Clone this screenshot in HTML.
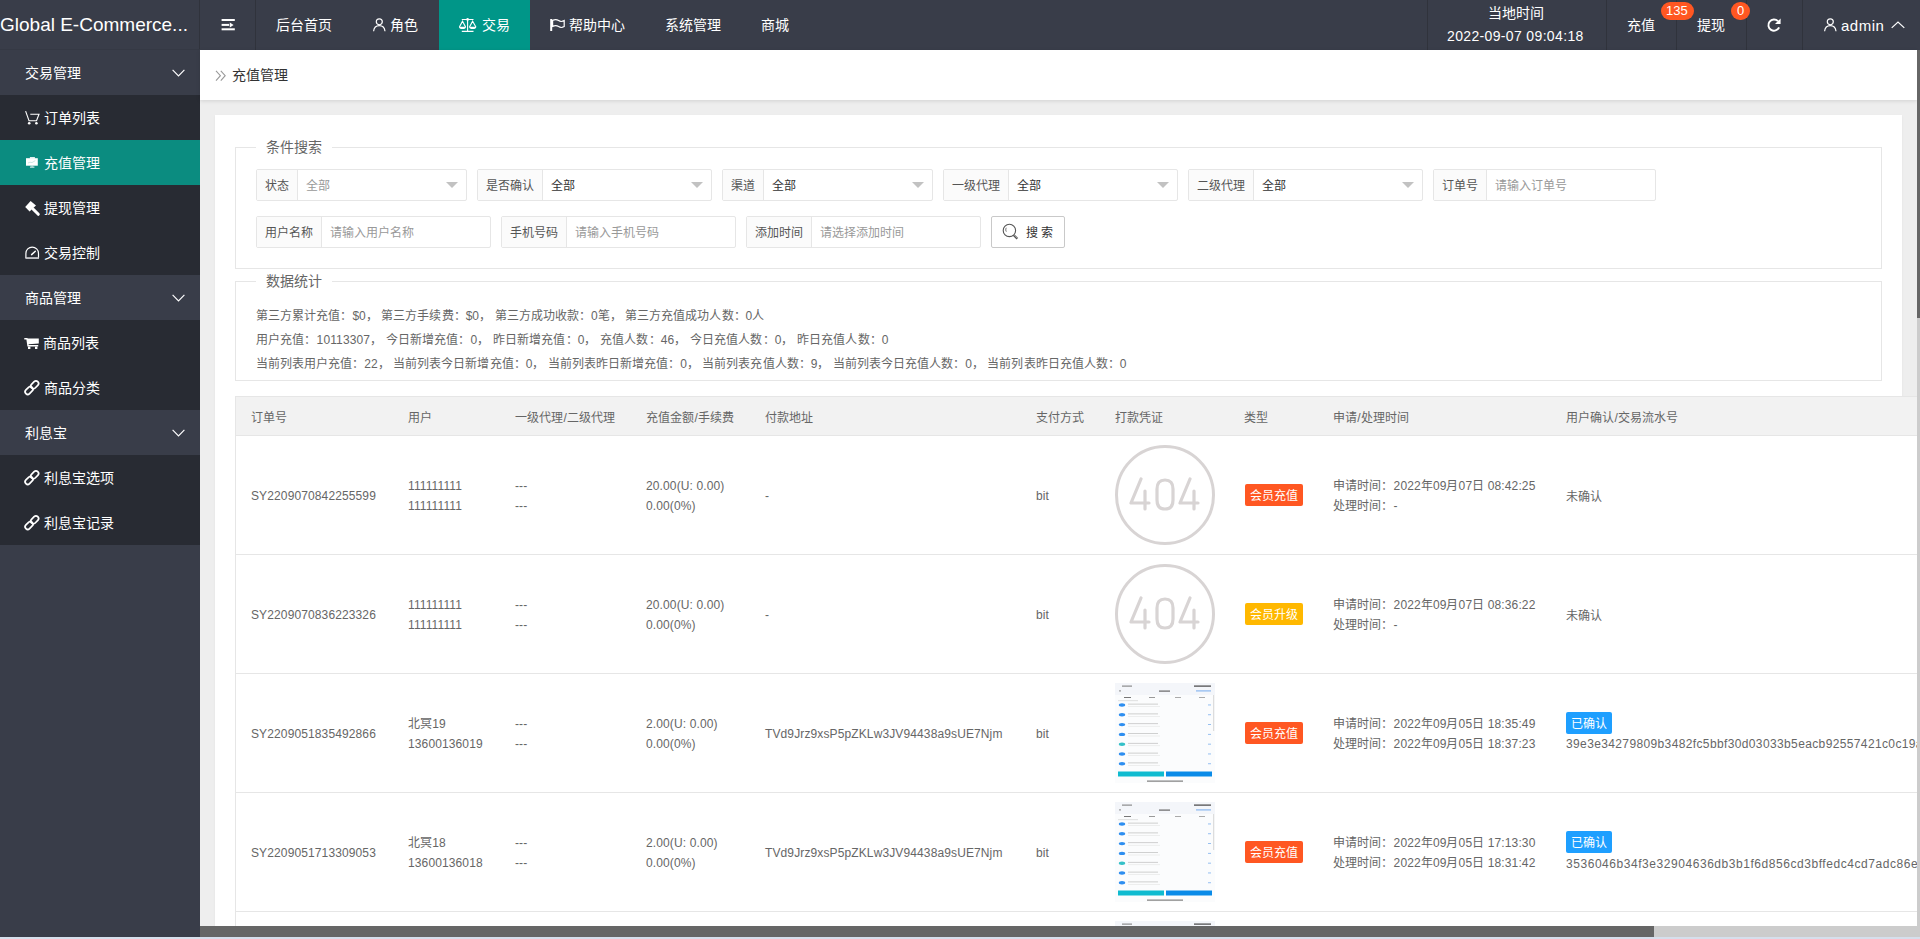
<!DOCTYPE html><html lang="zh-CN"><head><meta charset="utf-8"><style>
*{margin:0;padding:0;box-sizing:border-box}
html,body{width:1920px;height:939px;overflow:hidden;background:#eee;font-family:"Liberation Sans",sans-serif;font-size:14px;color:#666}
div,span{position:absolute;white-space:nowrap}
svg{position:absolute;overflow:visible}
#hdr{left:0;top:0;width:1920px;height:50px;background:#393D49}
.nt{color:#fff;font-size:14px;line-height:16px;font-weight:500}
.sep{top:0;width:1px;height:50px;background:#30333c}
#side{left:0;top:50px;width:200px;height:889px;background:#393D49}
.mi{left:0;width:200px;height:45px}
.sub{background:#282B33}
.act{background:#0b8c80}
.mt{color:#fff;font-size:14px;line-height:16px;font-weight:500}
#bc{left:200px;top:50px;width:1717px;height:50px;background:#fff;box-shadow:0 1px 4px rgba(0,0,0,.12)}
#card{left:215px;top:115px;width:1687px;height:830px;background:#fff;box-shadow:0 1px 2px rgba(0,0,0,.06)}
.fs{border:1px solid #e6e6e6;background:transparent}
.leg{background:#fff;font-size:14px;color:#666;line-height:16px}
.fi{height:32px;border:1px solid #e6e6e6;border-radius:2px;background:#fff}
.lab{left:0;top:0;height:30px;background:#FBFBFB;border-right:1px solid #e6e6e6}
.lt{font-size:12px;color:#555;line-height:14px}
.vt{font-size:12px;color:#333;line-height:14px;top:8px}
.ph{color:#999}
.tri{width:0;height:0;border-left:6px solid transparent;border-right:6px solid transparent;border-top:6px solid #c2c2c2}
.st{font-size:12px;color:#666;line-height:14px}
#tbl{left:235px;top:396px;width:1700px;height:600px;border-top:1px solid #e6e6e6;background:#fff}
#tbl>.lb{left:0;top:0;width:1px;height:600px;background:#e6e6e6}
.thd{left:0;top:0;width:1700px;height:39px;background:#f2f2f2;border-bottom:1px solid #e6e6e6}
.th{font-size:12px;color:#666;line-height:14px;top:13px}
.rb{left:0;width:1700px;height:1px;background:#e6e6e6}
.c{font-size:12px;color:#666;line-height:14px;letter-spacing:0.12px}
.bd{height:22px;border-radius:2px;color:#fff;font-size:12px;line-height:14px}
.bd span{top:5px;left:5px}
</style></head><body>
<div id="hdr">
<span style="left:0;top:14px;font-size:19px;line-height:22px;color:#fff">Global E-Commerce...</span>
<div class="sep" style="left:199px"></div>
<div class="sep" style="left:255px"></div>
<div class="sep" style="left:1427px"></div>
<div class="sep" style="left:1606px"></div>
<div class="sep" style="left:1676px"></div>
<div class="sep" style="left:1746px"></div>
<div class="sep" style="left:1802px"></div>
<div style="left:439px;top:0;width:91px;height:50px;background:#009688"></div>
<svg style="left:221px;top:19px" width="14" height="12" viewBox="0 0 14 12"><rect x="0.6" y="0" width="13.2" height="2" fill="#fff"/><rect x="0.6" y="4.9" width="7.6" height="2" fill="#fff"/><path d="M8.8 3.4 L12.6 5.9 L8.8 8.4Z" fill="#fff"/><rect x="0.6" y="9.3" width="13.2" height="2" fill="#fff"/></svg>
<span class="nt" style="left:276px;top:17px;">后台首页</span>
<svg style="left:373px;top:18px" width="13" height="14" viewBox="0 0 13 14"><circle cx="6.3" cy="3.8" r="3" fill="none" stroke="#fff" stroke-width="1.2"/><path d="M0.6 13.2 C1 9.4 3.3 7.6 6.3 7.6 C9.3 7.6 11.6 9.4 12 13.2" fill="none" stroke="#fff" stroke-width="1.2"/></svg>
<span class="nt" style="left:390px;top:17px;">角色</span>
<svg style="left:459px;top:18px" width="18" height="15" viewBox="0 0 18 15"><g fill="none" stroke="#fff" stroke-width="1.1"><path d="M2.8 1.5H14.5M8.6 1.5V13.4M2.8 13.4H14.5"/><path d="M0.4 9 L3.5 3.2 L6.6 9 M10.5 9 L13.6 3.2 L16.9 9"/></g><circle cx="8.6" cy="1.4" r="1.3" fill="#fff"/><path d="M0 8.7 H7 C7 10.2 5.8 11 3.5 11 C1.2 11 0 10.2 0 8.7Z M10.1 8.7 H17.3 C17.3 10.2 16 11 13.7 11 C11.4 11 10.1 10.2 10.1 8.7Z" fill="#fff"/></svg>
<span class="nt" style="left:482px;top:17px;">交易</span>
<svg style="left:549px;top:18px" width="17" height="14" viewBox="0 0 17 14"><rect x="1.2" y="1" width="2" height="12" fill="#fff"/><path d="M3.6 2.4 C6 1.2 8.2 1.6 9.6 2.6 C11 3.6 13.2 3.8 15.2 2.6 V8.6 C13.2 9.8 11 9.6 9.6 8.6 C8.2 7.6 6 7.2 3.6 8.4 Z" fill="none" stroke="#fff" stroke-width="1.2"/></svg>
<span class="nt" style="left:569px;top:17px;">帮助中心</span>
<span class="nt" style="left:665px;top:17px;">系统管理</span>
<span class="nt" style="left:761px;top:17px;">商城</span>
<span class="nt" style="left:1488px;top:5px;">当地时间</span>
<span class="nt" style="left:1447px;top:28px;letter-spacing:0.35px">2022-09-07 09:04:18</span>
<span class="nt" style="left:1627px;top:17px;">充值</span>
<div style="left:1661px;top:2px;width:33px;height:18px;border-radius:9px;background:#FF5722"></div>
<span class="nt" style="left:1666px;top:4px;font-size:13px;line-height:14px">135</span>
<span class="nt" style="left:1697px;top:17px;">提现</span>
<div style="left:1731px;top:2px;width:19px;height:18px;border-radius:9px;background:#FF5722"></div>
<span class="nt" style="left:1737px;top:4px;font-size:13px;line-height:14px">0</span>
<svg style="left:1767px;top:18px" width="14" height="14" viewBox="0 0 14 14"><path d="M11 3.2 A5.6 5.6 0 1 0 12.1 9.4" fill="none" stroke="#fff" stroke-width="1.9"/><path d="M13.6 0.4 V6 H8 Z" fill="#fff"/></svg>
<svg style="left:1824px;top:18px" width="13" height="14" viewBox="0 0 13 14"><circle cx="6.3" cy="3.8" r="3" fill="none" stroke="#fff" stroke-width="1.2"/><path d="M0.6 13.2 C1 9.4 3.3 7.6 6.3 7.6 C9.3 7.6 11.6 9.4 12 13.2" fill="none" stroke="#fff" stroke-width="1.2"/></svg>
<span class="nt" style="left:1841px;top:17px;font-size:15px;line-height:18px;letter-spacing:0.5px">admin</span>
<svg style="left:1891px;top:21px" width="14" height="8" viewBox="0 0 14 8"><path d="M0.7 6.9 L7 1 L13.3 6.9" fill="none" stroke="#fff" stroke-width="1.2"/></svg>
</div>
<div id="side"></div>
<div style="left:0;top:49px;width:200px;height:1px;background:#353944"></div>
<div class="mi" style="top:50px"></div>
<span class="mt" style="left:25px;top:65px;">交易管理</span>
<svg style="left:172px;top:69px" width="13" height="8" viewBox="0 0 13 8"><path d="M0.6 0.8 L6.5 6.9 L12.4 0.8" fill="none" stroke="#fff" stroke-width="1.15"/></svg>
<div class="mi sub" style="top:95px"></div>
<span class="mt" style="left:44px;top:110px;">订单列表</span>
<svg style="left:25px;top:110px" width="15" height="15" viewBox="0 0 15 15"><path d="M0.6 1.1 L4 10.7 H11.5 L14 4.3 H5.3" fill="none" stroke="#fff" stroke-width="1.1" stroke-linejoin="miter"/><circle cx="4.2" cy="13.3" r="1.3" fill="#fff"/><circle cx="11.4" cy="13.3" r="1.3" fill="#fff"/></svg>
<div class="mi act" style="top:140px"></div>
<span class="mt" style="left:44px;top:155px;">充值管理</span>
<svg style="left:25px;top:157px" width="14" height="12" viewBox="0 0 14 12"><rect x="4.9" y="0" width="5" height="1.8" fill="#dfeeed"/><rect x="1" y="1.2" width="11.8" height="7.5" fill="#fff"/><path d="M3 6 L5 5.2 L7 5.6 L10.3 3.6" stroke="#b5dcd8" stroke-width="0.7" fill="none"/><rect x="6.6" y="8.7" width="0.9" height="1" fill="#fff"/><rect x="5" y="9.6" width="4.4" height="1" fill="#fff"/></svg>
<div class="mi sub" style="top:185px"></div>
<span class="mt" style="left:44px;top:200px;">提现管理</span>
<svg style="left:25px;top:195px" width="15" height="22" viewBox="0 0 15 22"><path d="M0.2 12 L5.6 5.9 L11 10.4 L4.6 16.5Z" fill="#fff"/><path d="M8 14 L13.3 19.3" stroke="#fff" stroke-width="3" stroke-linecap="round"/></svg>
<div class="mi sub" style="top:230px"></div>
<span class="mt" style="left:44px;top:245px;">交易控制</span>
<svg style="left:25px;top:246px" width="15" height="14" viewBox="0 0 15 14"><path d="M0.9 12 V7.4 A6.3 6.3 0 0 1 13.5 7.4 V12" fill="none" stroke="#fff" stroke-width="1.2"/><rect x="0.4" y="11.2" width="13.6" height="1.7" fill="#d0d0d4"/><path d="M6.6 8.6 L10.3 5.3" stroke="#fff" stroke-width="1.5" stroke-linecap="round"/></svg>
<div class="mi" style="top:275px"></div>
<span class="mt" style="left:25px;top:290px;">商品管理</span>
<svg style="left:172px;top:294px" width="13" height="8" viewBox="0 0 13 8"><path d="M0.6 0.8 L6.5 6.9 L12.4 0.8" fill="none" stroke="#fff" stroke-width="1.15"/></svg>
<div class="mi sub" style="top:320px"></div>
<span class="mt" style="left:43px;top:335px;">商品列表</span>
<svg style="left:24px;top:337px" width="16" height="13" viewBox="0 0 16 13"><path d="M0.3 0.9 H3.4 L3.7 1.6 H14.8 V6.6 L4.6 7.2 L4.7 8 H14.2 V9.6 H3.4 L2.4 2.4 H0.3 Z" fill="#fff"/><rect x="4" y="9.6" width="2.4" height="2.4" fill="#fff"/><rect x="11" y="9.6" width="2.4" height="2.4" fill="#fff"/></svg>
<div class="mi sub" style="top:365px"></div>
<span class="mt" style="left:44px;top:380px;">商品分类</span>
<svg style="left:24px;top:380px" width="16" height="16" viewBox="0 0 16 16"><g transform="translate(7.85 7.65) rotate(-45)" fill="none" stroke="#fff" stroke-width="1.7"><rect x="-8.4" y="-2.6" width="8.9" height="5.2" rx="2.6"/><rect x="-0.5" y="-2.6" width="8.9" height="5.2" rx="2.6"/></g></svg>
<div class="mi" style="top:410px"></div>
<span class="mt" style="left:25px;top:425px;">利息宝</span>
<svg style="left:172px;top:429px" width="13" height="8" viewBox="0 0 13 8"><path d="M0.6 0.8 L6.5 6.9 L12.4 0.8" fill="none" stroke="#fff" stroke-width="1.15"/></svg>
<div class="mi sub" style="top:455px"></div>
<span class="mt" style="left:44px;top:470px;">利息宝选项</span>
<svg style="left:24px;top:470px" width="16" height="16" viewBox="0 0 16 16"><g transform="translate(7.85 7.65) rotate(-45)" fill="none" stroke="#fff" stroke-width="1.7"><rect x="-8.4" y="-2.6" width="8.9" height="5.2" rx="2.6"/><rect x="-0.5" y="-2.6" width="8.9" height="5.2" rx="2.6"/></g></svg>
<div class="mi sub" style="top:500px"></div>
<span class="mt" style="left:44px;top:515px;">利息宝记录</span>
<svg style="left:24px;top:515px" width="16" height="16" viewBox="0 0 16 16"><g transform="translate(7.85 7.65) rotate(-45)" fill="none" stroke="#fff" stroke-width="1.7"><rect x="-8.4" y="-2.6" width="8.9" height="5.2" rx="2.6"/><rect x="-0.5" y="-2.6" width="8.9" height="5.2" rx="2.6"/></g></svg>
<div id="bc"></div>
<svg style="left:215px;top:70px" width="12" height="12" viewBox="0 0 12 12"><path d="M1 0.8 L5.4 5.7 L1 10.6 M5.8 0.8 L10.2 5.7 L5.8 10.6" fill="none" stroke="#999" stroke-width="1.1"/></svg>
<span class="nt" style="left:232px;top:67px;color:#333;font-weight:400">充值管理</span>
<div id="card"></div>
<div class="fs" style="left:235px;top:147px;width:1647px;height:122px"></div>
<div class="leg" style="left:256px;top:139px;width:76px;height:16px"></div>
<span class="leg" style="left:266px;top:139px;">条件搜索</span>
<div class="fs" style="left:235px;top:281px;width:1647px;height:100px"></div>
<div class="leg" style="left:256px;top:273px;width:76px;height:16px"></div>
<span class="leg" style="left:266px;top:273px;">数据统计</span>
<div class="fi" style="left:256px;top:169px;width:211px"></div>
<div class="lab" style="left:257px;top:170px;width:41px"></div>
<span class="lt" style="left:265px;top:179px;">状态</span>
<span class="vt ph" style="left:306px;top:179px;">全部</span>
<div class="tri" style="left:446px;top:182px"></div>
<div class="fi" style="left:477px;top:169px;width:235px"></div>
<div class="lab" style="left:478px;top:170px;width:65px"></div>
<span class="lt" style="left:486px;top:179px;">是否确认</span>
<span class="vt" style="left:551px;top:179px;">全部</span>
<div class="tri" style="left:691px;top:182px"></div>
<div class="fi" style="left:722px;top:169px;width:211px"></div>
<div class="lab" style="left:723px;top:170px;width:41px"></div>
<span class="lt" style="left:731px;top:179px;">渠道</span>
<span class="vt" style="left:772px;top:179px;">全部</span>
<div class="tri" style="left:912px;top:182px"></div>
<div class="fi" style="left:943px;top:169px;width:235px"></div>
<div class="lab" style="left:944px;top:170px;width:65px"></div>
<span class="lt" style="left:952px;top:179px;">一级代理</span>
<span class="vt" style="left:1017px;top:179px;">全部</span>
<div class="tri" style="left:1157px;top:182px"></div>
<div class="fi" style="left:1188px;top:169px;width:235px"></div>
<div class="lab" style="left:1189px;top:170px;width:65px"></div>
<span class="lt" style="left:1197px;top:179px;">二级代理</span>
<span class="vt" style="left:1262px;top:179px;">全部</span>
<div class="tri" style="left:1402px;top:182px"></div>
<div class="fi" style="left:1433px;top:169px;width:223px"></div>
<div class="lab" style="left:1434px;top:170px;width:53px"></div>
<span class="lt" style="left:1442px;top:179px;">订单号</span>
<span class="vt ph" style="left:1495px;top:179px;">请输入订单号</span>
<div class="fi" style="left:256px;top:216px;width:235px"></div>
<div class="lab" style="left:257px;top:217px;width:65px"></div>
<span class="lt" style="left:265px;top:226px;">用户名称</span>
<span class="vt ph" style="left:330px;top:226px;">请输入用户名称</span>
<div class="fi" style="left:501px;top:216px;width:235px"></div>
<div class="lab" style="left:502px;top:217px;width:65px"></div>
<span class="lt" style="left:510px;top:226px;">手机号码</span>
<span class="vt ph" style="left:575px;top:226px;">请输入手机号码</span>
<div class="fi" style="left:746px;top:216px;width:235px"></div>
<div class="lab" style="left:747px;top:217px;width:65px"></div>
<span class="lt" style="left:755px;top:226px;">添加时间</span>
<span class="vt ph" style="left:820px;top:226px;">请选择添加时间</span>
<div style="left:991px;top:216px;width:74px;height:32px;border:1px solid #C9C9C9;border-radius:2px;background:#fff"></div>
<svg style="left:1002px;top:223px" width="18" height="18" viewBox="0 0 18 18"><circle cx="7.4" cy="7.4" r="6.2" fill="none" stroke="#555" stroke-width="1.1"/><path d="M11.6 11.9 L15.4 15.8" stroke="#555" stroke-width="2.2"/><path d="M11.9 11.6 L15.7 15.5" stroke="#fff" stroke-width="0.5"/><path d="M4.3 4.8 C3.6 5.8 3.6 7.6 4.3 8.6" stroke="#555" stroke-width="0.9" fill="none"/></svg>
<span class="vt" style="left:1026px;top:226px;top:226px;color:#333">搜 索</span>
<span class="st" style="left:256px;top:309px;letter-spacing:0.05px">第三方累计充值：$0， 第三方手续费：$0， 第三方成功收款：0笔， 第三方充值成功人数：0人</span>
<span class="st" style="left:256px;top:333px;letter-spacing:0.12px">用户充值：10113307， 今日新增充值：0， 昨日新增充值：0， 充值人数：46， 今日充值人数：0， 昨日充值人数：0</span>
<span class="st" style="left:256px;top:357px;letter-spacing:0.04px">当前列表用户充值：22， 当前列表今日新增充值：0， 当前列表昨日新增充值：0， 当前列表充值人数：9， 当前列表今日充值人数：0， 当前列表昨日充值人数：0</span>
<div style="left:235px;top:396px;width:1682px;height:530px;background:#fff"></div>
<div style="left:235px;top:396px;width:1682px;height:40px;background:#f2f2f2;border-top:1px solid #e6e6e6;border-bottom:1px solid #e6e6e6"></div>
<div style="left:235px;top:396px;width:1px;height:530px;background:#e6e6e6"></div>
<span class="c" style="left:251px;top:411px;">订单号</span>
<span class="c" style="left:408px;top:411px;">用户</span>
<span class="c" style="left:515px;top:411px;">一级代理/二级代理</span>
<span class="c" style="left:646px;top:411px;">充值金额/手续费</span>
<span class="c" style="left:765px;top:411px;">付款地址</span>
<span class="c" style="left:1036px;top:411px;">支付方式</span>
<span class="c" style="left:1115px;top:411px;">打款凭证</span>
<span class="c" style="left:1244px;top:411px;">类型</span>
<span class="c" style="left:1333px;top:411px;">申请/处理时间</span>
<span class="c" style="left:1566px;top:411px;">用户确认/交易流水号</span>
<span class="c" style="left:251px;top:489px;">SY2209070842255599</span>
<span class="c" style="left:408px;top:479px;">111111111</span>
<span class="c" style="left:408px;top:499px;">111111111</span>
<span class="c" style="left:515px;top:479px;">---</span>
<span class="c" style="left:515px;top:499px;">---</span>
<span class="c" style="left:646px;top:479px;">20.00(U: 0.00)</span>
<span class="c" style="left:646px;top:499px;">0.00(0%)</span>
<span class="c" style="left:765px;top:489px;">-</span>
<span class="c" style="left:1036px;top:489px;">bit</span>
<svg style="left:1115px;top:445px" width="100" height="100" viewBox="0 0 100 100"><circle cx="50" cy="50" r="48.5" fill="none" stroke="#d8d4d4" stroke-width="3"/><g fill="none" stroke="#d8d4d4" stroke-width="3.2" stroke-linecap="round" stroke-linejoin="round"><path d="M26 34 L16 58 H34 M30 46 V64"/><path d="M50 35 C44 35 42 39 42 44 V55 C42 60 44 64 50 64 C56 64 58 60 58 55 V44 C58 39 56 35 50 35Z"/><path d="M75 34 L65 58 H83 M79 46 V64"/></g></svg>
<div class="bd" style="left:1245px;top:484px;width:58px;background:#FF5722"><span>会员充值</span></div>
<span class="c" style="left:1333px;top:479px;">申请时间：2022年09月07日 08:42:25</span>
<span class="c" style="left:1333px;top:499px;">处理时间：-</span>
<span class="c" style="left:1566px;top:490px;">未确认</span>
<div class="rb" style="left:235px;top:554px;width:1682px"></div>
<span class="c" style="left:251px;top:608px;">SY2209070836223326</span>
<span class="c" style="left:408px;top:598px;">111111111</span>
<span class="c" style="left:408px;top:618px;">111111111</span>
<span class="c" style="left:515px;top:598px;">---</span>
<span class="c" style="left:515px;top:618px;">---</span>
<span class="c" style="left:646px;top:598px;">20.00(U: 0.00)</span>
<span class="c" style="left:646px;top:618px;">0.00(0%)</span>
<span class="c" style="left:765px;top:608px;">-</span>
<span class="c" style="left:1036px;top:608px;">bit</span>
<svg style="left:1115px;top:564px" width="100" height="100" viewBox="0 0 100 100"><circle cx="50" cy="50" r="48.5" fill="none" stroke="#d8d4d4" stroke-width="3"/><g fill="none" stroke="#d8d4d4" stroke-width="3.2" stroke-linecap="round" stroke-linejoin="round"><path d="M26 34 L16 58 H34 M30 46 V64"/><path d="M50 35 C44 35 42 39 42 44 V55 C42 60 44 64 50 64 C56 64 58 60 58 55 V44 C58 39 56 35 50 35Z"/><path d="M75 34 L65 58 H83 M79 46 V64"/></g></svg>
<div class="bd" style="left:1245px;top:603px;width:58px;background:#FFB800"><span>会员升级</span></div>
<span class="c" style="left:1333px;top:598px;">申请时间：2022年09月07日 08:36:22</span>
<span class="c" style="left:1333px;top:618px;">处理时间：-</span>
<span class="c" style="left:1566px;top:609px;">未确认</span>
<div class="rb" style="left:235px;top:673px;width:1682px"></div>
<span class="c" style="left:251px;top:727px;">SY2209051835492866</span>
<span class="c" style="left:408px;top:717px;">北冥19</span>
<span class="c" style="left:408px;top:737px;">13600136019</span>
<span class="c" style="left:515px;top:717px;">---</span>
<span class="c" style="left:515px;top:737px;">---</span>
<span class="c" style="left:646px;top:717px;">2.00(U: 0.00)</span>
<span class="c" style="left:646px;top:737px;">0.00(0%)</span>
<span class="c" style="left:765px;top:727px;">TVd9Jrz9xsP5pZKLw3JV94438a9sUE7Njm</span>
<span class="c" style="left:1036px;top:727px;">bit</span>
<svg style="left:1115px;top:683px" width="100" height="100" viewBox="0 0 100 100"><rect x="0" y="0" width="100" height="100" fill="#fbfcfd"/><rect x="0" y="0" width="100" height="12" fill="#f4f6fa"/><rect x="7" y="2.6" width="10" height="1" fill="#777"/><rect x="79" y="2.5" width="17" height="1.2" fill="#444"/><rect x="44" y="7.5" width="11" height="1.2" fill="#666"/><rect x="81" y="7.3" width="15" height="1.2" fill="#8ab8ef"/><rect x="4" y="7.3" width="2" height="1.2" fill="#999"/><rect x="9" y="14" width="7" height="1" fill="#777"/><rect x="34" y="14" width="6" height="1" fill="#999"/><rect x="60" y="14" width="6" height="1" fill="#aaa"/><rect x="84" y="14" width="6" height="1" fill="#aaa"/><rect x="3" y="17.5" width="20" height="0.6" fill="#ccc"/><rect x="98" y="12" width="1.2" height="36" fill="#ddd"/><ellipse cx="7" cy="22.0" rx="3.2" ry="1.7" fill="#2d8ef0"/><rect x="13" y="20.7" width="30" height="0.8" fill="#c4c4c4"/><rect x="13" y="23.3" width="32" height="0.6" fill="#e4e4e4"/><rect x="93" y="21.5" width="3" height="0.9" fill="#8ab8ef"/><ellipse cx="7" cy="31.8" rx="3.2" ry="1.7" fill="#2d8ef0"/><rect x="13" y="30.5" width="30" height="0.8" fill="#c4c4c4"/><rect x="13" y="33.1" width="32" height="0.6" fill="#e4e4e4"/><rect x="93" y="31.3" width="3" height="0.9" fill="#8ab8ef"/><ellipse cx="7" cy="41.6" rx="3.2" ry="1.7" fill="#2d8ef0"/><rect x="13" y="40.3" width="30" height="0.8" fill="#c4c4c4"/><rect x="13" y="42.9" width="32" height="0.6" fill="#e4e4e4"/><rect x="93" y="41.1" width="3" height="0.9" fill="#8ab8ef"/><ellipse cx="7" cy="51.4" rx="3.2" ry="1.7" fill="#2d8ef0"/><rect x="13" y="50.1" width="30" height="0.8" fill="#c4c4c4"/><rect x="13" y="52.7" width="32" height="0.6" fill="#e4e4e4"/><rect x="93" y="50.9" width="3" height="0.9" fill="#8ab8ef"/><ellipse cx="7" cy="61.2" rx="3.2" ry="1.7" fill="#34c0c8"/><rect x="13" y="59.9" width="30" height="0.8" fill="#c4c4c4"/><rect x="13" y="62.5" width="32" height="0.6" fill="#e4e4e4"/><rect x="93" y="60.7" width="3" height="0.9" fill="#8ab8ef"/><ellipse cx="7" cy="71.0" rx="3.2" ry="1.7" fill="#2d8ef0"/><rect x="13" y="69.7" width="30" height="0.8" fill="#c4c4c4"/><rect x="13" y="72.3" width="32" height="0.6" fill="#e4e4e4"/><rect x="93" y="70.5" width="3" height="0.9" fill="#8ab8ef"/><ellipse cx="7" cy="80.8" rx="3.2" ry="1.7" fill="#2d8ef0"/><rect x="13" y="79.5" width="30" height="0.8" fill="#c4c4c4"/><rect x="13" y="82.1" width="32" height="0.6" fill="#e4e4e4"/><rect x="93" y="80.3" width="3" height="0.9" fill="#8ab8ef"/><ellipse cx="7" cy="90.6" rx="3.2" ry="1.7" fill="#2d8ef0"/><rect x="13" y="89.3" width="30" height="0.8" fill="#c4c4c4"/><rect x="13" y="91.9" width="32" height="0.6" fill="#e4e4e4"/><rect x="93" y="90.1" width="3" height="0.9" fill="#8ab8ef"/><rect x="0" y="87" width="100" height="13" fill="#fbfcfd"/><rect x="3" y="88.5" width="46" height="5" fill="#0fbbd0"/><rect x="51" y="88.5" width="46" height="5" fill="#0a8be8"/><rect x="32" y="97.6" width="36" height="1" fill="#666"/></svg>
<div class="bd" style="left:1245px;top:722px;width:58px;background:#FF5722"><span>会员充值</span></div>
<span class="c" style="left:1333px;top:717px;">申请时间：2022年09月05日 18:35:49</span>
<span class="c" style="left:1333px;top:737px;">处理时间：2022年09月05日 18:37:23</span>
<div class="bd" style="left:1566px;top:712px;width:46px;background:#1E9FFF"><span>已确认</span></div>
<span class="c" style="left:1566px;top:737px;letter-spacing:0.37px">39e3e34279809b3482fc5bbf30d03033b5eacb92557421c0c19a0b3c</span>
<div class="rb" style="left:235px;top:792px;width:1682px"></div>
<span class="c" style="left:251px;top:846px;">SY2209051713309053</span>
<span class="c" style="left:408px;top:836px;">北冥18</span>
<span class="c" style="left:408px;top:856px;">13600136018</span>
<span class="c" style="left:515px;top:836px;">---</span>
<span class="c" style="left:515px;top:856px;">---</span>
<span class="c" style="left:646px;top:836px;">2.00(U: 0.00)</span>
<span class="c" style="left:646px;top:856px;">0.00(0%)</span>
<span class="c" style="left:765px;top:846px;">TVd9Jrz9xsP5pZKLw3JV94438a9sUE7Njm</span>
<span class="c" style="left:1036px;top:846px;">bit</span>
<svg style="left:1115px;top:802px" width="100" height="100" viewBox="0 0 100 100"><rect x="0" y="0" width="100" height="100" fill="#fbfcfd"/><rect x="0" y="0" width="100" height="12" fill="#f4f6fa"/><rect x="7" y="2.6" width="10" height="1" fill="#777"/><rect x="79" y="2.5" width="17" height="1.2" fill="#444"/><rect x="44" y="7.5" width="11" height="1.2" fill="#666"/><rect x="81" y="7.3" width="15" height="1.2" fill="#8ab8ef"/><rect x="4" y="7.3" width="2" height="1.2" fill="#999"/><rect x="9" y="14" width="7" height="1" fill="#777"/><rect x="34" y="14" width="6" height="1" fill="#999"/><rect x="60" y="14" width="6" height="1" fill="#aaa"/><rect x="84" y="14" width="6" height="1" fill="#aaa"/><rect x="3" y="17.5" width="20" height="0.6" fill="#ccc"/><rect x="98" y="12" width="1.2" height="36" fill="#ddd"/><ellipse cx="7" cy="22.0" rx="3.2" ry="1.7" fill="#2d8ef0"/><rect x="13" y="20.7" width="30" height="0.8" fill="#c4c4c4"/><rect x="13" y="23.3" width="32" height="0.6" fill="#e4e4e4"/><rect x="93" y="21.5" width="3" height="0.9" fill="#8ab8ef"/><ellipse cx="7" cy="31.8" rx="3.2" ry="1.7" fill="#2d8ef0"/><rect x="13" y="30.5" width="30" height="0.8" fill="#c4c4c4"/><rect x="13" y="33.1" width="32" height="0.6" fill="#e4e4e4"/><rect x="93" y="31.3" width="3" height="0.9" fill="#8ab8ef"/><ellipse cx="7" cy="41.6" rx="3.2" ry="1.7" fill="#2d8ef0"/><rect x="13" y="40.3" width="30" height="0.8" fill="#c4c4c4"/><rect x="13" y="42.9" width="32" height="0.6" fill="#e4e4e4"/><rect x="93" y="41.1" width="3" height="0.9" fill="#8ab8ef"/><ellipse cx="7" cy="51.4" rx="3.2" ry="1.7" fill="#2d8ef0"/><rect x="13" y="50.1" width="30" height="0.8" fill="#c4c4c4"/><rect x="13" y="52.7" width="32" height="0.6" fill="#e4e4e4"/><rect x="93" y="50.9" width="3" height="0.9" fill="#8ab8ef"/><ellipse cx="7" cy="61.2" rx="3.2" ry="1.7" fill="#34c0c8"/><rect x="13" y="59.9" width="30" height="0.8" fill="#c4c4c4"/><rect x="13" y="62.5" width="32" height="0.6" fill="#e4e4e4"/><rect x="93" y="60.7" width="3" height="0.9" fill="#8ab8ef"/><ellipse cx="7" cy="71.0" rx="3.2" ry="1.7" fill="#2d8ef0"/><rect x="13" y="69.7" width="30" height="0.8" fill="#c4c4c4"/><rect x="13" y="72.3" width="32" height="0.6" fill="#e4e4e4"/><rect x="93" y="70.5" width="3" height="0.9" fill="#8ab8ef"/><ellipse cx="7" cy="80.8" rx="3.2" ry="1.7" fill="#2d8ef0"/><rect x="13" y="79.5" width="30" height="0.8" fill="#c4c4c4"/><rect x="13" y="82.1" width="32" height="0.6" fill="#e4e4e4"/><rect x="93" y="80.3" width="3" height="0.9" fill="#8ab8ef"/><ellipse cx="7" cy="90.6" rx="3.2" ry="1.7" fill="#2d8ef0"/><rect x="13" y="89.3" width="30" height="0.8" fill="#c4c4c4"/><rect x="13" y="91.9" width="32" height="0.6" fill="#e4e4e4"/><rect x="93" y="90.1" width="3" height="0.9" fill="#8ab8ef"/><rect x="0" y="87" width="100" height="13" fill="#fbfcfd"/><rect x="3" y="88.5" width="46" height="5" fill="#0fbbd0"/><rect x="51" y="88.5" width="46" height="5" fill="#0a8be8"/><rect x="32" y="97.6" width="36" height="1" fill="#666"/></svg>
<div class="bd" style="left:1245px;top:841px;width:58px;background:#FF5722"><span>会员充值</span></div>
<span class="c" style="left:1333px;top:836px;">申请时间：2022年09月05日 17:13:30</span>
<span class="c" style="left:1333px;top:856px;">处理时间：2022年09月05日 18:31:42</span>
<div class="bd" style="left:1566px;top:831px;width:46px;background:#1E9FFF"><span>已确认</span></div>
<span class="c" style="left:1566px;top:857px;letter-spacing:0.55px">3536046b34f3e32904636db3b1f6d856cd3bffedc4cd7adc86e0a1b2</span>
<div class="rb" style="left:235px;top:911px;width:1682px"></div>
<svg style="left:1115px;top:921px" width="100" height="100" viewBox="0 0 100 100"><rect x="0" y="0" width="100" height="100" fill="#fbfcfd"/><rect x="0" y="0" width="100" height="12" fill="#f4f6fa"/><rect x="7" y="2.6" width="10" height="1" fill="#777"/><rect x="79" y="2.5" width="17" height="1.2" fill="#444"/><rect x="44" y="7.5" width="11" height="1.2" fill="#666"/><rect x="81" y="7.3" width="15" height="1.2" fill="#8ab8ef"/><rect x="4" y="7.3" width="2" height="1.2" fill="#999"/><rect x="9" y="14" width="7" height="1" fill="#777"/><rect x="34" y="14" width="6" height="1" fill="#999"/><rect x="60" y="14" width="6" height="1" fill="#aaa"/><rect x="84" y="14" width="6" height="1" fill="#aaa"/><rect x="3" y="17.5" width="20" height="0.6" fill="#ccc"/><rect x="98" y="12" width="1.2" height="36" fill="#ddd"/><ellipse cx="7" cy="22.0" rx="3.2" ry="1.7" fill="#2d8ef0"/><rect x="13" y="20.7" width="30" height="0.8" fill="#c4c4c4"/><rect x="13" y="23.3" width="32" height="0.6" fill="#e4e4e4"/><rect x="93" y="21.5" width="3" height="0.9" fill="#8ab8ef"/><ellipse cx="7" cy="31.8" rx="3.2" ry="1.7" fill="#2d8ef0"/><rect x="13" y="30.5" width="30" height="0.8" fill="#c4c4c4"/><rect x="13" y="33.1" width="32" height="0.6" fill="#e4e4e4"/><rect x="93" y="31.3" width="3" height="0.9" fill="#8ab8ef"/><ellipse cx="7" cy="41.6" rx="3.2" ry="1.7" fill="#2d8ef0"/><rect x="13" y="40.3" width="30" height="0.8" fill="#c4c4c4"/><rect x="13" y="42.9" width="32" height="0.6" fill="#e4e4e4"/><rect x="93" y="41.1" width="3" height="0.9" fill="#8ab8ef"/><ellipse cx="7" cy="51.4" rx="3.2" ry="1.7" fill="#2d8ef0"/><rect x="13" y="50.1" width="30" height="0.8" fill="#c4c4c4"/><rect x="13" y="52.7" width="32" height="0.6" fill="#e4e4e4"/><rect x="93" y="50.9" width="3" height="0.9" fill="#8ab8ef"/><ellipse cx="7" cy="61.2" rx="3.2" ry="1.7" fill="#34c0c8"/><rect x="13" y="59.9" width="30" height="0.8" fill="#c4c4c4"/><rect x="13" y="62.5" width="32" height="0.6" fill="#e4e4e4"/><rect x="93" y="60.7" width="3" height="0.9" fill="#8ab8ef"/><ellipse cx="7" cy="71.0" rx="3.2" ry="1.7" fill="#2d8ef0"/><rect x="13" y="69.7" width="30" height="0.8" fill="#c4c4c4"/><rect x="13" y="72.3" width="32" height="0.6" fill="#e4e4e4"/><rect x="93" y="70.5" width="3" height="0.9" fill="#8ab8ef"/><ellipse cx="7" cy="80.8" rx="3.2" ry="1.7" fill="#2d8ef0"/><rect x="13" y="79.5" width="30" height="0.8" fill="#c4c4c4"/><rect x="13" y="82.1" width="32" height="0.6" fill="#e4e4e4"/><rect x="93" y="80.3" width="3" height="0.9" fill="#8ab8ef"/><ellipse cx="7" cy="90.6" rx="3.2" ry="1.7" fill="#2d8ef0"/><rect x="13" y="89.3" width="30" height="0.8" fill="#c4c4c4"/><rect x="13" y="91.9" width="32" height="0.6" fill="#e4e4e4"/><rect x="93" y="90.1" width="3" height="0.9" fill="#8ab8ef"/><rect x="0" y="87" width="100" height="13" fill="#fbfcfd"/><rect x="3" y="88.5" width="46" height="5" fill="#0fbbd0"/><rect x="51" y="88.5" width="46" height="5" fill="#0a8be8"/><rect x="32" y="97.6" width="36" height="1" fill="#666"/></svg>
<div style="left:1917px;top:50px;width:3px;height:889px;background:#ccc"></div>
<div style="left:1917px;top:50px;width:3px;height:268px;background:#666"></div>
<div style="left:200px;top:926px;width:1717px;height:11px;background:#ccc"></div>
<div style="left:200px;top:926px;width:1454px;height:11px;background:#666"></div>
<div style="left:0;top:937px;width:1920px;height:2px;background:#d6dfec"></div>
</body></html>
